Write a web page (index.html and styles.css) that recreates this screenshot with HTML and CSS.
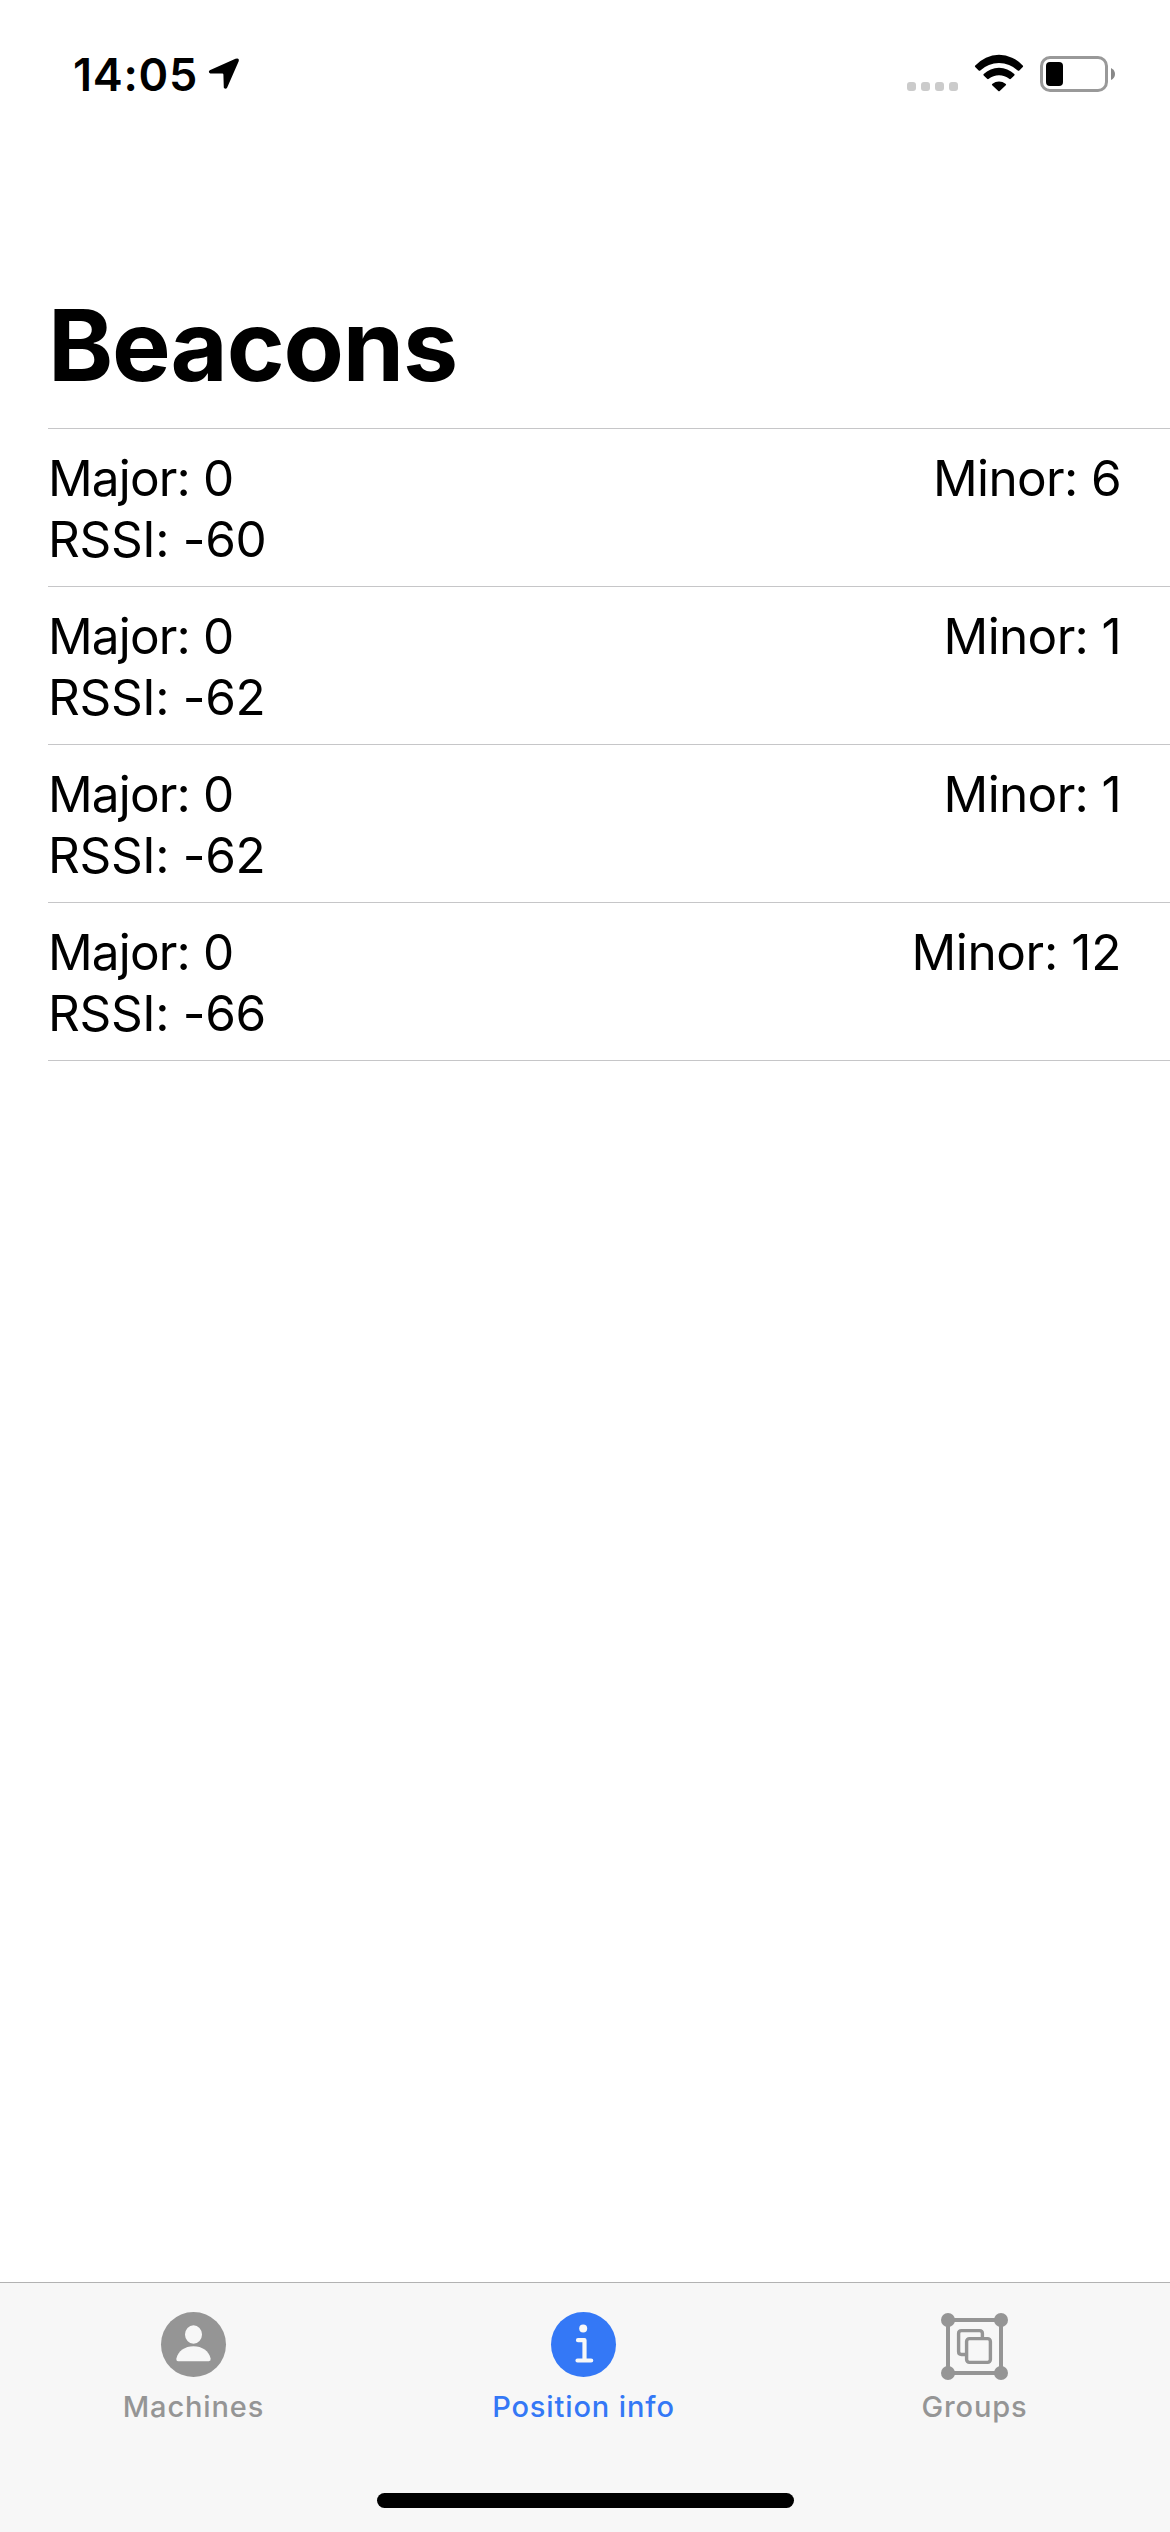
FILE: index.html
```html
<!DOCTYPE html>
<html lang="en">
<head>
<meta charset="utf-8">
<title>Beacons</title>
<link rel="stylesheet" href="styles.css">
</head>
<body>
<header class="status">
  <div class="status-left">
    <span class="time">14:05</span>
    <svg class="arrow" width="32" height="34" viewBox="208 57 32 34"><path d="M210.300 69.900L235.500 58.700Q239.600 57.500 238.700 61.300L227.200 87.500Q225.700 90 223.800 87.700L223.400 74.600Q223.300 73.700 222.400 73.600L210.300 73.500Q207.400 71.600 210.300 69.900Z"/></svg>
  </div>
  <div class="status-right">
    <div class="dots"><i></i><i></i><i></i><i></i></div>
    <svg class="wifi" width="50" height="38" viewBox="974 54 50 38"><path d="M975.300 65.600A31.500 31.500 0 0 1 1022.700 65.600Q1023.500 66.300 1022.800 67L1019.300 70.500Q1018.500 71.100 1017.700 70.400A27.500 27.500 0 0 0 980.300 70.400Q979.500 71.100 978.700 70.500L975.200 67Q974.500 66.300 975.300 65.600ZM983.700 74A22 22 0 0 1 1014.300 74Q1015 74.800 1014.300 75.500L1010.900 78.800Q1010 79.500 1009.200 78.800A16 16 0 0 0 988.800 78.800Q988 79.500 987.100 78.800L983.700 75.500Q983 74.800 983.700 74ZM992.500 83.800A10.500 10.500 0 0 1 1005.500 83.800Q1006.600 84.500 1005.800 85.200L999.700 91Q999 91.500 998.300 91L992.200 85.200Q991.400 84.500 992.500 83.800Z"/></svg>
    <svg class="battery" width="76" height="36" viewBox="1040 56 76 36"><rect x="1041.500" y="57.500" width="65" height="33" rx="8.500" fill="none" stroke="#999" stroke-width="3"/><rect x="1046" y="62" width="17" height="24" rx="4"/><path d="M1111 68Q1115 70 1115 74T1111 80Z" fill="#888"/></svg>
  </div>
</header>
<main>
  <h1>Beacons</h1>
  <ul class="list">
    <li><div><p class="major">Major: 0</p><p>RSSI: -60</p></div><p class="minor">Minor: 6</p></li>
    <li><div><p class="major">Major: 0</p><p>RSSI: -62</p></div><p class="minor">Minor: 1</p></li>
    <li><div><p class="major">Major: 0</p><p>RSSI: -62</p></div><p class="minor">Minor: 1</p></li>
    <li><div><p class="major">Major: 0</p><p>RSSI: -66</p></div><p>Minor: 12</p></li>
  </ul>
</main>
<nav class="tabs">
  <a class="tab">
    <svg width="67" height="69" viewBox="0 0 67 69"><circle cx="33.500" cy="34.500" r="32.500" fill="#959595"/><ellipse cx="33.500" cy="24.500" rx="8.500" ry="9.300" fill="#f7f7f7"/><path d="M18.200 51.200Q16 51 16.400 48.500C18 41 25 36.300 33.500 36.300S49 41 50.600 48.500Q51 51 48.800 51.200Z" fill="#f7f7f7"/></svg>
    <span>Machines</span>
  </a>
  <a class="tab active">
    <svg width="67" height="69" viewBox="0 0 67 69"><circle cx="33.500" cy="34.500" r="32.500" fill="#3478f6"/><circle cx="33.200" cy="18.600" r="4" fill="#f7f7f7"/><path d="M28 30.200H34.500V50.500M27.500 50.500H41.200" fill="none" stroke="#f7f7f7" stroke-width="4.200" stroke-linecap="round" stroke-linejoin="round"/></svg>
    <span>Position info</span>
  </a>
  <a class="tab">
    <svg width="67" height="69" viewBox="0 0 67 69"><g fill="none" stroke="#959595"><rect x="7" y="10" width="53" height="53" stroke-width="4"/><path d="M25 44.500H20.500Q17.600 44.500 17.600 41.600V23.500Q17.600 20.600 20.500 20.600H38.500Q41.400 20.600 41.400 23.500V28" stroke-width="3.400"/><rect x="25.600" y="28.600" width="23.800" height="23.800" rx="2.800" stroke-width="3.400"/></g><g fill="#959595"><circle cx="7" cy="10" r="7"/><circle cx="60" cy="10" r="7"/><circle cx="7" cy="63" r="7"/><circle cx="60" cy="63" r="7"/></g></svg>
    <span>Groups</span>
  </a>
  <div class="home"></div>
</nav>
</body>
</html>
```
FILE: styles.css
```css
* { box-sizing: border-box; margin: 0; padding: 0; }
body {
  width: 1170px;
  height: 2532px;
  display: flex;
  flex-direction: column;
  background: #fff;
  color: #000;
  font-family: Inter, "Liberation Sans", sans-serif;
  overflow: hidden;
}
svg { display: block; overflow: visible; }
.status {
  height: 132px;
  display: flex;
  justify-content: space-between;
  padding: 54px 54px 0 73px;
}
.status-left, .status-right { display: flex; align-items: flex-start; }
.time { font-size: 45px; font-weight: 600; line-height: 42px; letter-spacing: 0.75px; width: 135px; }
.arrow { margin-top: 3px; }
.dots { display: flex; gap: 5px; margin: 28px 16px 0 0; }
.dots i { width: 9px; height: 9px; border-radius: 3px; background: #cbcbcb; }
.wifi { margin-right: 16px; }
.battery { margin-top: 2px; }
main { flex: 1; padding-left: 48px; }
h1 {
  height: 296px;
  padding-top: 153px;
  font-size: 98.6px;
  font-weight: 700;
  line-height: 120px;
  letter-spacing: -1.17px;
}
.list { list-style: none; border-top: 1px solid #c6c6c8; }
.list li {
  height: 158px;
  display: flex;
  justify-content: space-between;
  padding: 19px 49px 0 0;
  border-bottom: 1px solid #c6c6c8;
  font-size: 49.5px;
  line-height: 61px;
  letter-spacing: -0.35px;
}
.list .major { letter-spacing: -0.86px; }
.list .minor { letter-spacing: -0.65px; }
.tabs {
  height: 250px;
  display: grid;
  grid-template-columns: 387px 393px 389px;
  grid-template-rows: 210px 15px;
  border-top: 1px solid #b2b2b2;
  background: #f7f7f7;
}
.tab {
  display: flex;
  flex-direction: column;
  align-items: center;
  padding-top: 27px;
  color: #959595;
  font-size: 29px;
  font-weight: 500;
  line-height: 36px;
  letter-spacing: 0.88px;
}
.tab span { margin-top: 10px; }
.active { color: #3478f6; }
.home {
  grid-column: 1 / -1;
  justify-self: center;
  margin-left: 2px;
  width: 417px;
  height: 15px;
  border-radius: 8px;
  background: #000;
}
```
